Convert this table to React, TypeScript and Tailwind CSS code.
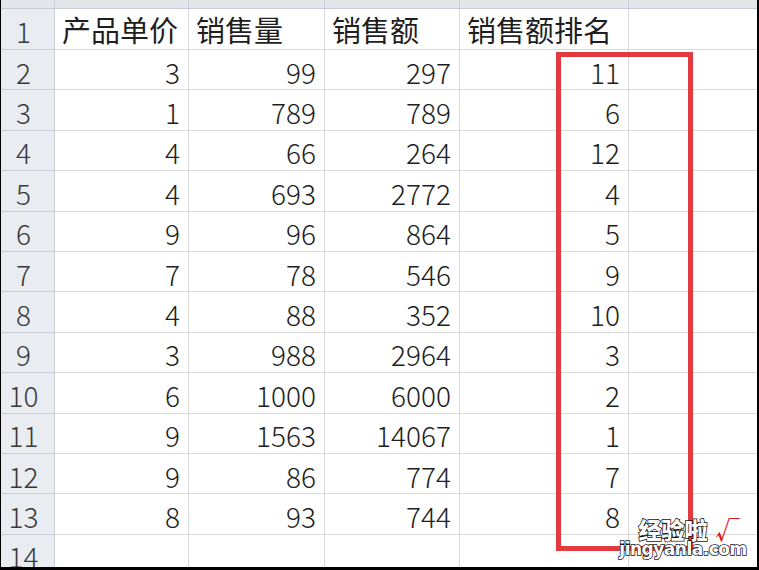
import React from "react";

const data: [number, number, number, number][] = [
  [3, 99, 297, 11],
  [1, 789, 789, 6],
  [4, 66, 264, 12],
  [4, 693, 2772, 4],
  [9, 96, 864, 5],
  [7, 78, 546, 9],
  [4, 88, 352, 10],
  [3, 988, 2964, 3],
  [6, 1000, 6000, 2],
  [9, 1563, 14067, 1],
  [9, 86, 774, 7],
  [8, 93, 744, 8],
];

const cols = ["w-[134px]", "w-[136px]", "w-[135px]", "w-[169px]", "w-[129px]"];
const font = "font-['Noto_Sans_CJK_SC','Noto_Sans',sans-serif]";

function RowHead({ n, h = "h-[40.4px]" }: { n: number; h?: string }) {
  return (
    <div
      className={`${h} w-[54px] shrink-0 bg-[#e9ecf0] border-b border-r border-[#c9ced6] flex items-center justify-center pr-2 pt-1 text-[28px] font-light text-[#3a3a3a]`}
    >
      {n}
    </div>
  );
}

export default function App() {
  return (
    <div className={`relative w-[759px] h-[570px] overflow-hidden bg-white ${font} border-l border-r-2 border-b-[3px] border-black`}>
      {/* column header strip, mostly cut off */}
      <div className="flex h-[9px] bg-[#e3e6ea] border-b border-[#c9ced6]">
        <div className="w-[54px] shrink-0 border-r border-[#c9ced6]" />
        {cols.map((c, i) => (
          <div key={i} className={`${c} shrink-0 border-r border-[#c9ced6]`} />
        ))}
      </div>

      {/* header row */}
      <div className="flex">
        <RowHead n={1} h="h-[41px]" />
        {["产品单价", "销售量", "销售额", "销售额排名", ""].map((t, i) => (
          <div
            key={i}
            className={`${cols[i]} h-[41px] shrink-0 border-r border-b border-[#dadada] flex items-center pl-[7px] text-[29px] text-[#1e1e1e] leading-none`}
          >
            {t}
          </div>
        ))}
      </div>

      {data.map((r, ri) => (
        <div key={ri} className="flex">
          <RowHead n={ri + 2} />
          {[...r, null].map((v, i) => (
            <div
              key={i}
              className={`${cols[i]} h-[40.4px] shrink-0 border-r border-b border-[#dadada] flex items-center justify-end pr-2 pt-1 text-[28px] font-light text-[#1e1e1e] leading-none`}
            >
              {v}
            </div>
          ))}
        </div>
      ))}

      <div className="flex">
        <RowHead n={14} h="h-[40px]" />
        {cols.map((c, i) => (
          <div key={i} className={`${c} h-[40px] shrink-0 border-r border-[#dadada]`} />
        ))}
      </div>

      {/* red highlight box */}
      <div className="absolute left-[555px] top-[52px] w-[137px] h-[499px] border-[5px] border-[#e23a3f]" />

      {/* watermark */}
      <div className="absolute left-[618px] top-[517px] w-[128px] flex flex-col items-center leading-none">
        <div className="flex items-center gap-2 pl-3">
          <span className="text-[23px] font-black text-white [-webkit-text-stroke:1.5px_#111] [paint-order:stroke_fill]">
            经验啦
          </span>
          <span className="text-[24px] font-bold text-[#e0151b]">√</span>
        </div>
        <span className="text-[17px] font-bold tracking-[-0.5px] text-white [-webkit-text-stroke:1.5px_#111] [paint-order:stroke_fill] font-['DejaVu_Sans',sans-serif] whitespace-nowrap">
          jingyanla.com
        </span>
      </div>
    </div>
  );
}
